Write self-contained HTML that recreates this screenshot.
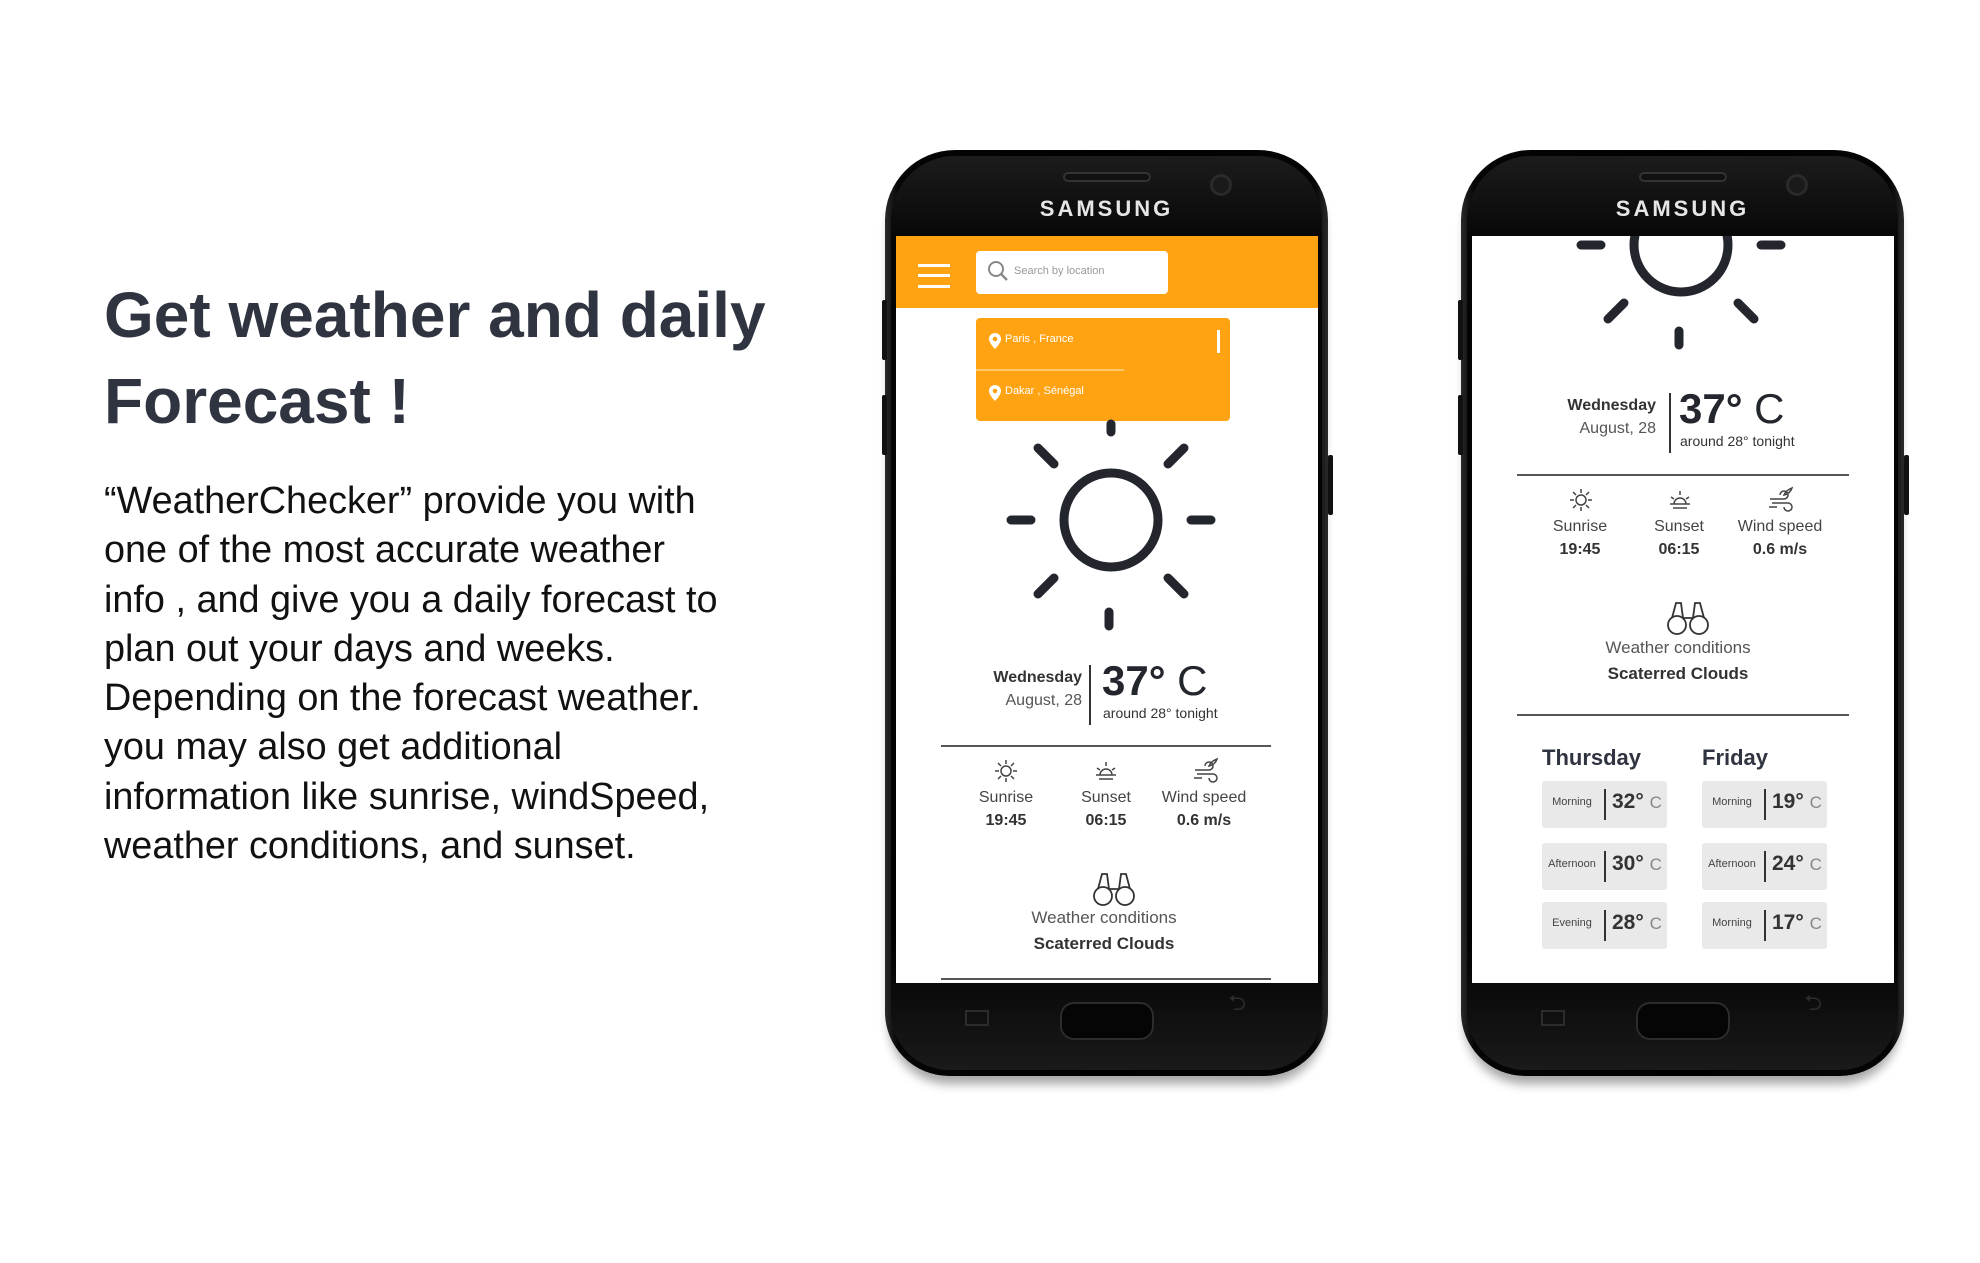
<!DOCTYPE html>
<html><head><meta charset="utf-8"><style>
*{margin:0;padding:0;box-sizing:border-box}
body{width:1980px;height:1263px;background:#fff;position:relative;overflow:hidden;font-family:"Liberation Sans",sans-serif}
.abs{position:absolute}
h1{position:absolute;left:104px;top:272px;font-size:64px;line-height:86px;font-weight:bold;color:#2f3440;letter-spacing:0px}
.para{position:absolute;left:104px;top:477px;font-size:37.8px;line-height:49.3px;color:#111;width:760px}
.phone{position:absolute;top:150px;width:443px;height:926px;border-radius:70px 70px 64px 64px;background:linear-gradient(90deg,#2a2a2a 0,#050505 3%,#000 50%,#050505 97%,#2a2a2a 100%);box-shadow:0 12px 10px -4px rgba(0,0,0,.35)}
.phone:before{content:"";position:absolute;left:6px;right:6px;top:6px;bottom:6px;border-radius:64px 64px 58px 58px;background:linear-gradient(180deg,#1c1c1c 0,#050505 10%,#000 85%,#1a1a1a 100%)}
.screen{position:absolute;top:86px;left:11px;width:422px;height:747px;background:#fff;overflow:hidden}
.sams{position:absolute;top:46px;width:100%;text-align:center;color:#e6e6e6;font-weight:bold;font-size:22px;letter-spacing:3px}
.spk{position:absolute;top:22px;left:50%;margin-left:-44px;width:88px;height:10px;border-radius:5px;border:2px solid #333;background:#111}
.cam{position:absolute;top:24px;right:96px;width:22px;height:22px;border-radius:50%;background:#1a1a1a;border:3px solid #2a2a2a}
.home{position:absolute;bottom:36px;left:50%;margin-left:-47px;width:94px;height:38px;border-radius:14px;border:2px solid #2c2c2c;background:#050505}
.btnL{position:absolute;width:5px;background:#111;border-radius:2px}
.t{position:absolute;white-space:nowrap;color:#333}
.c{text-align:center}
.b{font-weight:bold}
.card{position:absolute;width:125px;height:47px;background:#e9e9e9;border-radius:3px}
.card .l{position:absolute;left:0;width:60px;top:15px;text-align:center;font-size:11px;color:#444}
.card .s{position:absolute;left:62px;top:8px;width:2px;height:31px;background:#333}
.card .v{position:absolute;left:70px;top:9px;font-size:21px;font-weight:bold;color:#333}
.card .v span{font-weight:normal;font-size:17px;color:#888}
</style></head><body>

<h1>Get weather and daily<br>Forecast !</h1>
<div class="para">“WeatherChecker” provide you with<br>one of the most accurate weather<br>info , and give you a daily forecast to<br>plan out your days and weeks.<br>Depending on the forecast weather.<br>you may also get additional<br>information like sunrise, windSpeed,<br>weather conditions, and sunset.</div>

<!-- LEFT PHONE -->
<div class="phone" style="left:885px">
 <div class="spk"></div><div class="cam"></div>
 <div class="sams">SAMSUNG</div>
 <div class="screen">
  <div class="abs" style="left:0;top:0;width:422px;height:72px;background:#ffa312"></div>
  <div class="abs" style="left:22px;top:28px;width:32px;height:3px;background:#fff;box-shadow:0 10px 0 #fff,0 21px 0 #fff"></div>
  <div class="abs" style="left:80px;top:15px;width:192px;height:43px;background:#fff;border-radius:4px"></div>
  <svg class="abs" style="left:91px;top:24px" width="22" height="22" viewBox="0 0 22 22"><circle cx="9" cy="9" r="7" fill="none" stroke="#888" stroke-width="2"/><path d="M14 14l6 6" stroke="#888" stroke-width="2.4"/></svg>
  <div class="t" style="left:118px;top:29px;font-size:11px;color:#999">Search by location</div>
  <div class="abs" style="left:80px;top:82px;width:254px;height:103px;background:#ffa312;border-radius:4px"></div>
  <div class="abs" style="left:80px;top:133px;width:148px;height:2px;background:#ffc66a"></div>
  <div class="abs" style="left:321px;top:94px;width:3px;height:23px;background:#fff"></div>
  <svg class="abs" style="left:92px;top:96px" width="14" height="18" viewBox="0 0 14 18"><path d="M7 1a6 6 0 0 0-6 6c0 4 6 10 6 10s6-6 6-10a6 6 0 0 0-6-6z" fill="#fff"/><circle cx="7" cy="7" r="2.3" fill="#ffa312"/></svg>
  <div class="t" style="left:109px;top:97px;font-size:11px;color:#fff">Paris , France</div>
  <svg class="abs" style="left:92px;top:148px" width="14" height="18" viewBox="0 0 14 18"><path d="M7 1a6 6 0 0 0-6 6c0 4 6 10 6 10s6-6 6-10a6 6 0 0 0-6-6z" fill="#fff"/><circle cx="7" cy="7" r="2.3" fill="#ffa312"/></svg>
  <div class="t" style="left:109px;top:149px;font-size:11px;color:#fff">Dakar , Sénégal</div>
  <svg class="abs" style="left:105px;top:170px" width="220" height="230" viewBox="0 0 220 230" stroke="#23262d" stroke-width="9" stroke-linecap="round" fill="none">
   <circle cx="110" cy="114" r="47"/>
   <path d="M110 18v8M108 206v14M10 114h20M190 114h20M37 42l16 16M167 172l16 16M183 42l-16 16M53 172l-16 16"/>
  </svg>
  <div class="t b" style="right:236px;top:433px;font-size:16px">Wednesday</div>
  <div class="t" style="right:236px;top:456px;font-size:16px;color:#555">August, 28</div>
  <div class="abs" style="left:193px;top:429px;width:2px;height:60px;background:#333"></div>
  <div class="t" style="left:206px;top:421px;font-size:42px;color:#23262d"><b>37°</b> C</div>
  <div class="t" style="left:207px;top:469px;font-size:14px">around 28° tonight</div>
  <div class="abs" style="left:45px;top:509px;width:330px;height:2px;background:#555"></div>
  <svg class="abs" style="left:97px;top:522px" width="26" height="26" viewBox="0 0 26 26" stroke="#444" stroke-width="1.5" fill="none"><circle cx="13" cy="13" r="5"/><path d="M13 2v4M13 20v4M2 13h4M20 13h4M5 5l3 3M18 18l3 3M21 5l-3 3M8 18l-3 3"/></svg>
  <svg class="abs" style="left:197px;top:522px" width="26" height="26" viewBox="0 0 26 26" stroke="#444" stroke-width="1.5" fill="none"><path d="M7 17a6 6 0 0 1 12 0M3 17h20M6 21h14M13 4v4M4 10l3 2M22 10l-3 2"/></svg>
  <svg class="abs" style="left:296px;top:520px" width="28" height="28" viewBox="0 0 28 28" stroke="#444" stroke-width="1.5" fill="none"><path d="M3 14h14a4 4 0 1 0-4-4M5 18h16a4 4 0 1 1-4 4M2 22h8M17 10c2-5 6-6 8-7-1 3-3 6-8 7z"/></svg>
  <div class="t c" style="left:50px;width:120px;top:553px;font-size:16px;color:#444">Sunrise</div>
  <div class="t c b" style="left:50px;width:120px;top:576px;font-size:16px">19:45</div>
  <div class="t c" style="left:150px;width:120px;top:553px;font-size:16px;color:#444">Sunset</div>
  <div class="t c b" style="left:150px;width:120px;top:576px;font-size:16px">06:15</div>
  <div class="t c" style="left:248px;width:120px;top:553px;font-size:16px;color:#444">Wind speed</div>
  <div class="t c b" style="left:248px;width:120px;top:576px;font-size:16px">0.6 m/s</div>
  <svg class="abs" style="left:196px;top:635px" width="44" height="36" viewBox="0 0 44 36" stroke="#333" stroke-width="1.8" fill="none"><circle cx="11" cy="25" r="9"/><circle cx="33" cy="25" r="9"/><path d="M6 18l4-15h5l2 15M38 18l-4-15h-5l-2 15M17 18h10"/></svg>
  <div class="t c" style="left:0;width:416px;top:672px;font-size:17px;color:#555">Weather conditions</div>
  <div class="t c b" style="left:0;width:416px;top:698px;font-size:17px">Scaterred Clouds</div>
  <div class="abs" style="left:45px;top:742px;width:330px;height:2px;background:#555"></div>
 </div>
 <div class="home"></div>
 <div class="abs" style="left:80px;bottom:50px;width:24px;height:16px;border:2px solid #2c2c2c"></div>
 <div class="abs" style="right:82px;bottom:52px;color:#2c2c2c;font-size:22px">⮌</div>
</div>
<div class="btnL" style="left:882px;top:300px;height:60px"></div>
<div class="btnL" style="left:882px;top:395px;height:60px"></div>
<div class="btnL" style="left:1328px;top:455px;height:60px"></div>

<!-- RIGHT PHONE -->
<div class="phone" style="left:1461px">
 <div class="spk"></div><div class="cam"></div>
 <div class="sams">SAMSUNG</div>
 <div class="screen">
  <svg class="abs" style="left:99px;top:-105px" width="220" height="230" viewBox="0 0 220 230" stroke="#23262d" stroke-width="9" stroke-linecap="round" fill="none">
   <circle cx="110" cy="114" r="47"/>
   <path d="M110 10v12M108 200v14M10 114h20M190 114h20M37 42l16 16M167 172l16 16M183 42l-16 16M53 172l-16 16"/>
  </svg>
  <div class="t b" style="right:238px;top:161px;font-size:16px">Wednesday</div>
  <div class="t" style="right:238px;top:184px;font-size:16px;color:#555">August, 28</div>
  <div class="abs" style="left:197px;top:157px;width:2px;height:60px;background:#333"></div>
  <div class="t" style="left:207px;top:149px;font-size:42px;color:#23262d"><b>37°</b> C</div>
  <div class="t" style="left:208px;top:197px;font-size:14px">around 28° tonight</div>
  <div class="abs" style="left:45px;top:238px;width:332px;height:2px;background:#555"></div>
  <svg class="abs" style="left:96px;top:251px" width="26" height="26" viewBox="0 0 26 26" stroke="#444" stroke-width="1.5" fill="none"><circle cx="13" cy="13" r="5"/><path d="M13 2v4M13 20v4M2 13h4M20 13h4M5 5l3 3M18 18l3 3M21 5l-3 3M8 18l-3 3"/></svg>
  <svg class="abs" style="left:195px;top:251px" width="26" height="26" viewBox="0 0 26 26" stroke="#444" stroke-width="1.5" fill="none"><path d="M7 17a6 6 0 0 1 12 0M3 17h20M6 21h14M13 4v4M4 10l3 2M22 10l-3 2"/></svg>
  <svg class="abs" style="left:295px;top:249px" width="28" height="28" viewBox="0 0 28 28" stroke="#444" stroke-width="1.5" fill="none"><path d="M3 14h14a4 4 0 1 0-4-4M5 18h16a4 4 0 1 1-4 4M2 22h8M17 10c2-5 6-6 8-7-1 3-3 6-8 7z"/></svg>
  <div class="t c" style="left:48px;width:120px;top:282px;font-size:16px;color:#444">Sunrise</div>
  <div class="t c b" style="left:48px;width:120px;top:305px;font-size:16px">19:45</div>
  <div class="t c" style="left:147px;width:120px;top:282px;font-size:16px;color:#444">Sunset</div>
  <div class="t c b" style="left:147px;width:120px;top:305px;font-size:16px">06:15</div>
  <div class="t c" style="left:248px;width:120px;top:282px;font-size:16px;color:#444">Wind speed</div>
  <div class="t c b" style="left:248px;width:120px;top:305px;font-size:16px">0.6 m/s</div>
  <svg class="abs" style="left:194px;top:364px" width="44" height="36" viewBox="0 0 44 36" stroke="#333" stroke-width="1.8" fill="none"><circle cx="11" cy="25" r="9"/><circle cx="33" cy="25" r="9"/><path d="M6 18l4-15h5l2 15M38 18l-4-15h-5l-2 15M17 18h10"/></svg>
  <div class="t c" style="left:0;width:412px;top:402px;font-size:17px;color:#555">Weather conditions</div>
  <div class="t c b" style="left:0;width:412px;top:428px;font-size:17px">Scaterred Clouds</div>
  <div class="abs" style="left:45px;top:478px;width:332px;height:2px;background:#555"></div>
  <div class="t b" style="left:70px;top:509px;font-size:22px;color:#2f3440">Thursday</div>
  <div class="t b" style="left:230px;top:509px;font-size:22px;color:#2f3440">Friday</div>
  <div class="card" style="left:70px;top:545px"><div class="l">Morning</div><div class="s"></div><div class="v">32° <span>C</span></div></div>
  <div class="card" style="left:70px;top:607px"><div class="l">Afternoon</div><div class="s"></div><div class="v">30° <span>C</span></div></div>
  <div class="card" style="left:70px;top:666px"><div class="l">Evening</div><div class="s"></div><div class="v">28° <span>C</span></div></div>
  <div class="card" style="left:230px;top:545px"><div class="l">Morning</div><div class="s"></div><div class="v">19° <span>C</span></div></div>
  <div class="card" style="left:230px;top:607px"><div class="l">Afternoon</div><div class="s"></div><div class="v">24° <span>C</span></div></div>
  <div class="card" style="left:230px;top:666px"><div class="l">Morning</div><div class="s"></div><div class="v">17° <span>C</span></div></div>
 </div>
 <div class="home"></div>
 <div class="abs" style="left:80px;bottom:50px;width:24px;height:16px;border:2px solid #2c2c2c"></div>
 <div class="abs" style="right:82px;bottom:52px;color:#2c2c2c;font-size:22px">⮌</div>
</div>
<div class="btnL" style="left:1458px;top:300px;height:60px"></div>
<div class="btnL" style="left:1458px;top:395px;height:60px"></div>
<div class="btnL" style="left:1904px;top:455px;height:60px"></div>
</body></html>
